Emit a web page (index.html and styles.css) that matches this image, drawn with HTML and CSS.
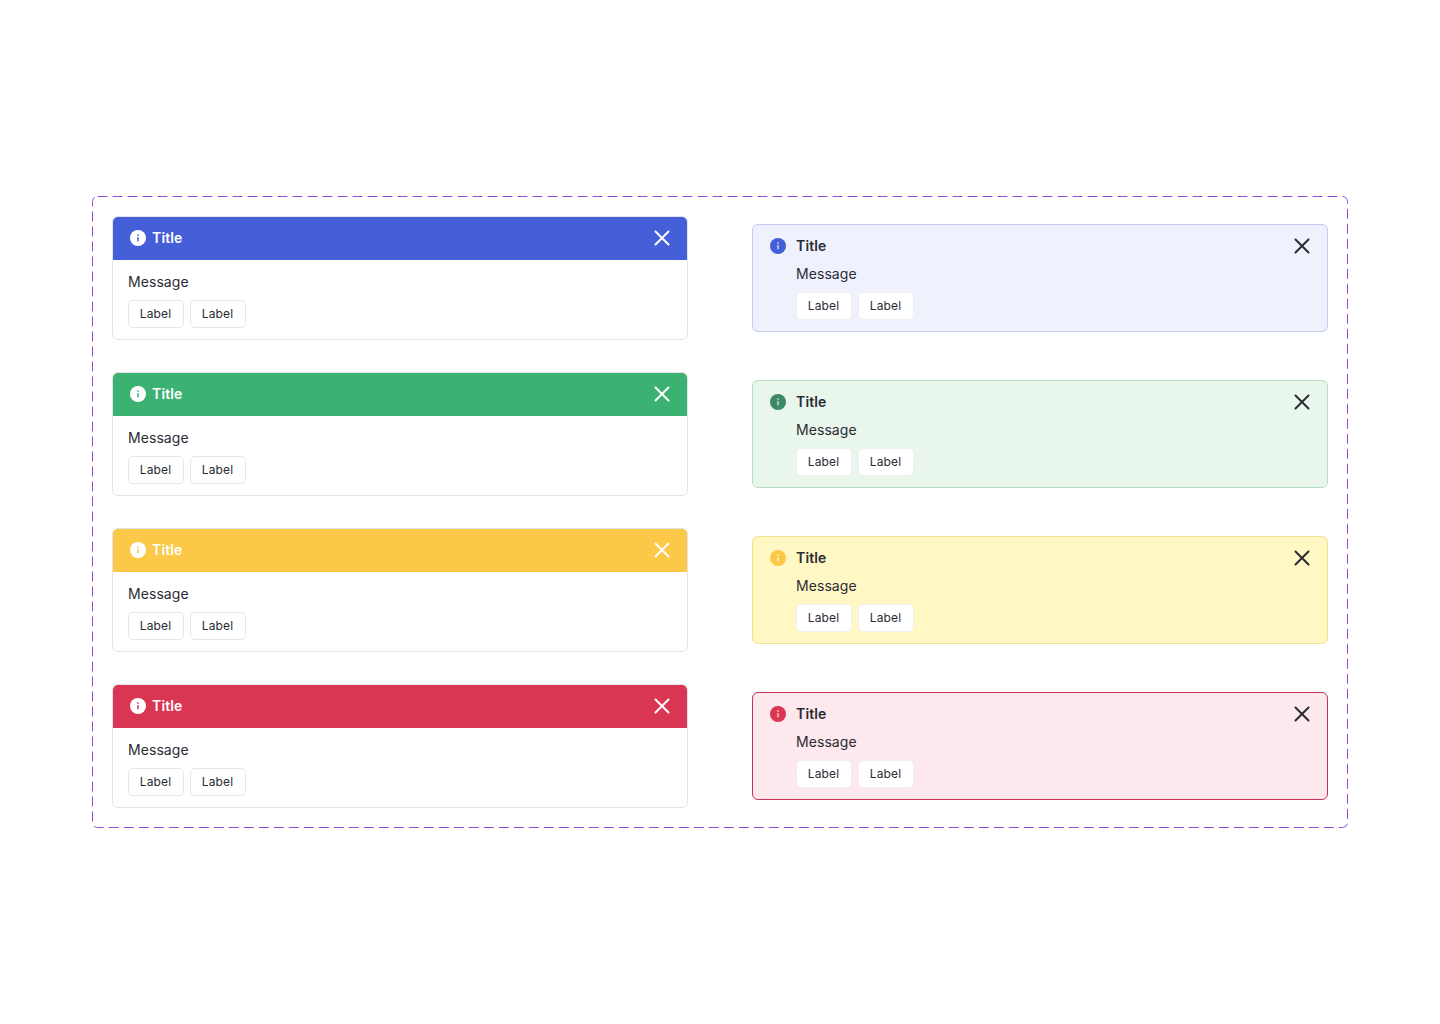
FILE: index.html
```html
<!DOCTYPE html>
<html lang="en">
<head>
<meta charset="utf-8">
<title>Alerts</title>
<link rel="stylesheet" href="styles.css">
</head>
<body>
<svg class="defs" width="0" height="0" aria-hidden="true">
  <symbol id="close" viewBox="0 0 16 16"><path d="M1.5 1.5 14.5 14.5M14.5 1.5 1.5 14.5" fill="none" stroke="currentColor" stroke-width="2" stroke-linecap="round"/></symbol>
  <symbol id="info" viewBox="0 0 16 16"><circle cx="8" cy="8" r="8" fill="currentColor"/><circle class="dot" cx="8" cy="5.1" r="0.9"/><rect class="dot" x="7.25" y="6.9" width="1.5" height="4.4" rx="0.3"/></symbol>
</svg>
<main class="frame">
  <svg class="dash" width="1256" height="632" aria-hidden="true"><rect x="0.5" y="0.5" width="1255" height="631" rx="5" ry="5"/></svg>
  <article class="alert solid blue"><header class="head"><svg class="icon"><use href="#info"/></svg><h2 class="title">Title</h2><svg class="close"><use href="#close"/></svg></header><div class="body"><p class="message">Message</p><div class="actions"><button class="btn">Label</button><button class="btn">Label</button></div></div></article>
  <article class="alert soft blue"><svg class="icon"><use href="#info"/></svg><div class="content"><h2 class="title">Title</h2><p class="message">Message</p><div class="actions"><button class="btn">Label</button><button class="btn">Label</button></div></div><svg class="close"><use href="#close"/></svg></article>

  <article class="alert solid green"><header class="head"><svg class="icon"><use href="#info"/></svg><h2 class="title">Title</h2><svg class="close"><use href="#close"/></svg></header><div class="body"><p class="message">Message</p><div class="actions"><button class="btn">Label</button><button class="btn">Label</button></div></div></article>
  <article class="alert soft green"><svg class="icon"><use href="#info"/></svg><div class="content"><h2 class="title">Title</h2><p class="message">Message</p><div class="actions"><button class="btn">Label</button><button class="btn">Label</button></div></div><svg class="close"><use href="#close"/></svg></article>

  <article class="alert solid yellow"><header class="head"><svg class="icon"><use href="#info"/></svg><h2 class="title">Title</h2><svg class="close"><use href="#close"/></svg></header><div class="body"><p class="message">Message</p><div class="actions"><button class="btn">Label</button><button class="btn">Label</button></div></div></article>
  <article class="alert soft yellow"><svg class="icon"><use href="#info"/></svg><div class="content"><h2 class="title">Title</h2><p class="message">Message</p><div class="actions"><button class="btn">Label</button><button class="btn">Label</button></div></div><svg class="close"><use href="#close"/></svg></article>

  <article class="alert solid red"><header class="head"><svg class="icon"><use href="#info"/></svg><h2 class="title">Title</h2><svg class="close"><use href="#close"/></svg></header><div class="body"><p class="message">Message</p><div class="actions"><button class="btn">Label</button><button class="btn">Label</button></div></div></article>
  <article class="alert soft red"><svg class="icon"><use href="#info"/></svg><div class="content"><h2 class="title">Title</h2><p class="message">Message</p><div class="actions"><button class="btn">Label</button><button class="btn">Label</button></div></div><svg class="close"><use href="#close"/></svg></article>
</main>
</body>
</html>
```
FILE: styles.css
```css
* { box-sizing: border-box; }
html, body { margin: 0; }
body {
  height: 1024px;
  background: #fff;
  font-family: Inter, "Liberation Sans", sans-serif;
  color: #2b2b33;
  overflow: hidden;
}
.defs { position: absolute; }
.frame {
  position: relative;
  width: 1256px;
  height: 632px;
  margin: 196px 0 0 92px;
  padding: 20px;
  display: grid;
  grid-template-columns: 576px 576px;
  column-gap: 64px;
  row-gap: 32px;
  align-items: center;
  align-content: start;
}
.dash { position: absolute; left: 0; top: 0; pointer-events: none; }
.dash rect { fill: none; stroke: #9747d8; stroke-width: 1; stroke-dasharray: 10 5; }
.alert { border-radius: 6px; border: 1px solid; }
.title { margin: 0; font-size: 14px; line-height: 20px; font-weight: 600; letter-spacing: 0.01em; }
.message { margin: 0; font-size: 14px; line-height: 20px; letter-spacing: 0.005em; }
.icon { width: 16px; height: 16px; flex: none; }
.close { width: 16px; height: 16px; flex: none; margin-left: auto; }
.dot { fill: var(--dot); }
.actions { display: flex; gap: 6px; }
.btn {
  width: 56px;
  height: 28px;
  padding: 0 1px 0 0;
  background: #fff;
  border: 1px solid #e6e6ea;
  border-radius: 5px;
  font: 400 12px/16px Inter, "Liberation Sans", sans-serif;
  letter-spacing: 0.01em;
  color: #2b2b33;
}

.solid { height: 124px; background: #fff; border-color: #e4e4e8; overflow: hidden; }
.solid .head {
  height: 43px;
  display: flex;
  align-items: center;
  gap: 6px;
  padding: 0 17px 1px;
  color: #fff;
}
.solid .icon { color: #fff; }
.solid .close { color: #fff; }
.solid .body { padding: 12px 15px 0; }
.solid .message { margin-bottom: 8px; }
.solid.blue { --dot: #455fd9; }
.solid.blue .head { background: #455fd9; }
.solid.green { --dot: #3bb272; }
.solid.green .head { background: #3bb272; }
.solid.yellow { --dot: #fbc947; }
.solid.yellow .head { background: #fbc947; }
.solid.red { --dot: #d93654; }
.solid.red .head { background: #d93654; }

.soft {
  height: 108px;
  display: flex;
  align-items: flex-start;
  padding: 11px 17px 0;
  color: #2b2b33;
}
.soft .icon { margin-top: 2px; color: var(--accent); }
.soft .content { margin-left: 10px; }
.soft .title { margin-bottom: 8px; }
.soft .message { margin-bottom: 8px; }
.soft .btn { border-color: #f0f0f2; }
.soft .close { margin-top: 2px; }
.soft { --dot: rgba(255,255,255,.75); }
.soft.blue { --accent: #455fd9; background: #eff1fd; border-color: #c4cbf2; }
.soft.green { --accent: #3b8a63; background: #e9f6ec; border-color: #b5e0c4; }
.soft.yellow { --accent: #fbc947; background: #fff8c5; border-color: #f5e28c; }
.soft.red { --accent: #d93654; background: #fde8ee; border-color: #c9304f; }
```
